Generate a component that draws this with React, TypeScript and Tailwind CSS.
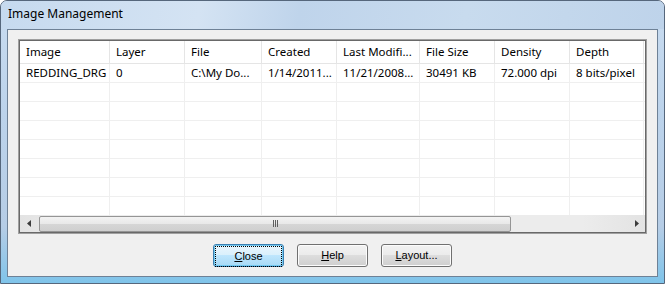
import React from 'react';

const cols = [
  { name: 'Image', w: 'w-[90px]', val: 'REDDING_DRG' },
  { name: 'Layer', w: 'w-[75px]', val: '0' },
  { name: 'File', w: 'w-[77px]', val: 'C:\\My Do...' },
  { name: 'Created', w: 'w-[75px]', val: '1/14/2011...' },
  { name: 'Last Modifi...', w: 'w-[83px]', val: '11/21/2008...' },
  { name: 'File Size', w: 'w-[75px]', val: '30491 KB' },
  { name: 'Density', w: 'w-[75px]', val: '72.000 dpi' },
  { name: 'Depth', w: 'w-[74px]', val: '8 bits/pixel' },
];

const emptyRows = [1, 2, 3, 4, 5, 6, 7];

function DlgButton({ label, hot, focused }: { label: string; hot: string; focused?: boolean }) {
  const rest = label.slice(1);
  return (
    <button
      className={
        'h-[23px] w-[71px] rounded-[3px] border text-[11px] text-black ' +
        (focused
          ? 'border-[#3c7fb1] bg-[linear-gradient(#eaf6fd_0%,#d9f0fc_50%,#bee6fd_50%,#a7d9f5_100%)] shadow-[0_0_0_1px_#72c9f0_inset]'
          : 'border-[#707070] bg-[linear-gradient(#f2f2f2_0%,#ebebeb_50%,#dddddd_50%,#cfcfcf_100%)] shadow-[0_0_0_1px_#fcfcfc_inset]')
      }
      style={{ fontFamily: '"Liberation Sans", Arial, sans-serif' }}
    >
      <span className={focused ? 'flex h-full items-center justify-center border border-dotted border-black m-[1px] h-[19px]' : 'flex h-full items-center justify-center'}>
        <span className="underline underline-offset-1">{hot}</span>
        {rest}
      </span>
    </button>
  );
}

export default function App() {
  return (
    <div
      className="flex h-[284px] w-[665px] flex-col overflow-hidden rounded-t-[7px] border border-[#56677c] bg-[linear-gradient(180deg,#c9dcf0_0%,#bcd3eb_40%,#b6cde6_80%,#7fc4ea_100%)] text-[11.5px] text-black"
      style={{ fontFamily: '"Noto Sans", "Open Sans", sans-serif' }}
    >
      {/* title bar */}
      <div className="flex h-[28px] shrink-0 items-center pl-[7px] pb-[2px] text-[12px] bg-[linear-gradient(100deg,#c6daef_0%,#d4e3f3_30%,#bfd4eb_45%,#c8dbee_70%,#bed3ea_100%)]">
        Image Management
      </div>

      {/* client area */}
      <div className="mx-[6px] mb-[6px] flex flex-1 flex-col border border-[#6e8196] bg-[#f0f0f0] px-[10px] pt-[9px] pb-[9px]">
        {/* list view */}
        <div className="flex h-[195px] shrink-0 flex-col border border-[#a0a0a0] bg-white">
          <div className="flex flex-1 flex-col overflow-hidden border border-[#696969]">
            <div className="flex flex-1 flex-col overflow-hidden">
              {/* header */}
              <div className="flex h-[23px] shrink-0 border-b border-[#e5e5e5] bg-white">
                {cols.map((c) => (
                  <div key={c.name} className={c.w + ' flex shrink-0 items-center border-r border-[#e5e5e5] pl-[6px] pb-[1px] whitespace-nowrap'}>
                    {c.name}
                  </div>
                ))}
              </div>
              {/* data row */}
              <div className="flex h-[19px] shrink-0 border-b border-[#efefef]">
                {cols.map((c) => (
                  <div key={c.name} className={c.w + ' flex shrink-0 items-center border-r border-[#efefef] pl-[6px] whitespace-nowrap'}>
                    {c.val}
                  </div>
                ))}
              </div>
              {emptyRows.map((r) => (
                <div key={r} className="flex h-[19px] shrink-0 border-b border-[#efefef]">
                  {cols.map((c) => (
                    <div key={c.name} className={c.w + ' shrink-0 border-r border-[#efefef]'} />
                  ))}
                </div>
              ))}
            </div>

            {/* horizontal scrollbar */}
            <div className="flex h-[17px] shrink-0 items-center bg-[linear-gradient(90deg,#e3e3e3,#ececec_10%,#ececec_90%,#e3e3e3)]">
              <div className="flex h-[17px] w-[17px] shrink-0 items-center justify-center">
                <svg width="4" height="7" viewBox="0 0 4 7">
                  <path d="M4 0 L0 3.5 L4 7 Z" fill="#3c3c3c" />
                </svg>
              </div>
              <div className="ml-[2px] flex h-[16px] w-[472px] shrink-0 items-center justify-center rounded-[2px] border border-[#959595] bg-[linear-gradient(#f3f3f3_0%,#e8e8e8_50%,#d6d6d6_50%,#cfcfcf_100%)]">
                <div className="flex gap-[1px]">
                  <div className="h-[7px] w-[1px] bg-[#5f5f5f]" />
                  <div className="h-[7px] w-[1px] bg-[#5f5f5f]" />
                  <div className="h-[7px] w-[1px] bg-[#5f5f5f]" />
                </div>
              </div>
              <div className="flex-1" />
              <div className="flex h-[17px] w-[17px] shrink-0 items-center justify-center">
                <svg width="4" height="7" viewBox="0 0 4 7">
                  <path d="M0 0 L4 3.5 L0 7 Z" fill="#3c3c3c" />
                </svg>
              </div>
            </div>
          </div>
        </div>

        {/* buttons */}
        <div className="mt-[10px] flex justify-center gap-[13px]">
          <DlgButton label="Close" hot="C" focused />
          <DlgButton label="Help" hot="H" />
          <DlgButton label="Layout..." hot="L" />
        </div>
      </div>
    </div>
  );
}
